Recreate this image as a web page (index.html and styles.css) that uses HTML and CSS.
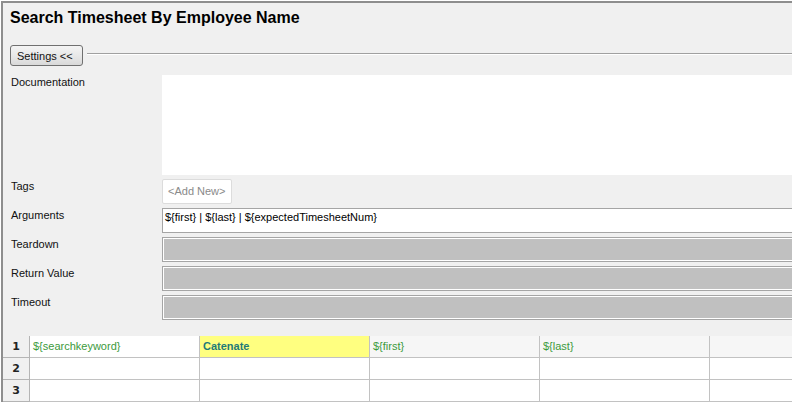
FILE: index.html
```html
<!DOCTYPE html>
<html>
<head>
<meta charset="utf-8">
<link rel="stylesheet" href="styles.css">
</head>
<body>
<div class="frame">
  <h1 class="title">Search Timesheet By Employee Name</h1>
  <div class="settings-row">
    <button class="btn">Settings &lt;&lt;</button>
    <div class="sep"></div>
  </div>
  <div class="form">
    <div class="label">Documentation</div>
    <div class="doc"></div>
    <div class="label">Tags</div>
    <div class="tags"><span class="tag-new">&lt;Add New&gt;</span></div>
    <div class="label">Arguments</div>
    <div class="field">${first} | ${last} | ${expectedTimesheetNum}</div>
    <div class="label">Teardown</div>
    <div class="field disabled"></div>
    <div class="label">Return Value</div>
    <div class="field disabled"></div>
    <div class="label">Timeout</div>
    <div class="field disabled"></div>
  </div>
  <div class="grid">
    <div class="rh">1</div>
    <div class="cell var">${searchkeyword}</div>
    <div class="cell kw">Catenate</div>
    <div class="cell var shade">${first}</div>
    <div class="cell var shade">${last}</div>
    <div class="cell shade last"></div>
    <div class="rh">2</div>
    <div class="cell"></div>
    <div class="cell"></div>
    <div class="cell"></div>
    <div class="cell"></div>
    <div class="cell last"></div>
    <div class="rh">3</div>
    <div class="cell"></div>
    <div class="cell"></div>
    <div class="cell"></div>
    <div class="cell"></div>
    <div class="cell last"></div>
  </div>
</div>
</body>
</html>
```
FILE: styles.css
```css
html, body {
  margin: 0;
  padding: 0;
  overflow: hidden;
  background: #ffffff;
}
body {
  font-family: "Liberation Sans", Arial, sans-serif;
  font-size: 11px;
  line-height: 13px;
  color: #111;
}
.frame {
  box-sizing: border-box;
  margin: 1px 0 0 1px;
  width: calc(100% - 1px);
  height: 401px;
  overflow: hidden;
  border-top: 2px solid #8e8e8e;
  border-left: 2px solid #8e8e8e;
  background: #f0f0f0;
}
.title {
  margin: 5px 0 0 0;
  padding-left: 7px;
  font-size: 16px;
  line-height: 20px;
  font-weight: bold;
  color: #000;
}
.settings-row {
  display: flex;
  align-items: flex-start;
  margin-top: 17px;
  padding-left: 7px;
}
.btn {
  width: 73px;
  height: 21px;
  padding: 0 0 0 6px;
  text-align: left;
  border: 1px solid #707070;
  border-radius: 3px;
  background: linear-gradient(#f4f4f4, #e8e8e8 50%, #d9d9d9);
  font-family: "Liberation Sans", Arial, sans-serif;
  font-size: 11px;
  color: #111;
}
.sep {
  flex: 1;
  margin: 8px 0 0 4px;
  height: 0;
  border-top: 1px solid #a0a0a0;
  border-bottom: 1px solid #ffffff;
}
.form {
  display: grid;
  grid-template-columns: 159px 1fr;
  grid-template-rows: 100px 25px 25px 25px 25px 25px;
  row-gap: 4px;
  margin-top: 9px;
}
.label {
  padding: 1px 0 0 8px;
}
.doc {
  background: #fff;
}
.tags {
  display: flex;
}
.tag-new {
  display: flex;
  align-items: center;
  box-sizing: border-box;
  width: 70px;
  height: 25px;
  padding: 0 5px;
  background: #fff;
  border: 1px solid #dcdcdc;
  border-radius: 2px;
  color: #8a8a8a;
}
.field {
  box-sizing: border-box;
  border: 1px solid #a5a5a5;
  border-right: none;
  background: #fff;
  padding: 2px 2px;
  color: #000;
}
.field.disabled {
  background: #c0c0c0;
  box-shadow: inset 0 1px 0 #fff, inset 1px 0 0 #fff, inset 0 -1px 0 #fff;
}
.grid {
  display: grid;
  grid-template-columns: 27px repeat(4, 170px) 1fr;
  grid-auto-rows: 22px;
  margin-top: 16px;
}
.rh, .cell {
  box-sizing: border-box;
  border-right: 1px solid #c2c2c2;
  border-bottom: 1px solid #c2c2c2;
  display: flex;
  align-items: center;
}
.cell.last {
  border-right: none;
}
.rh {
  justify-content: center;
  font-family: "DejaVu Sans", sans-serif;
  font-weight: bold;
  font-size: 11px;
  color: #222;
  background: #f0f0f0;
  border-color: #b4b4b4;
}
.cell {
  background: #fff;
  padding: 0 3px;
}
.cell.shade {
  background: #f6f6f6;
}
.var {
  color: #3c9a3c;
}
.kw {
  background: #ffff80;
  color: #1f7a78;
  font-weight: bold;
}
```
